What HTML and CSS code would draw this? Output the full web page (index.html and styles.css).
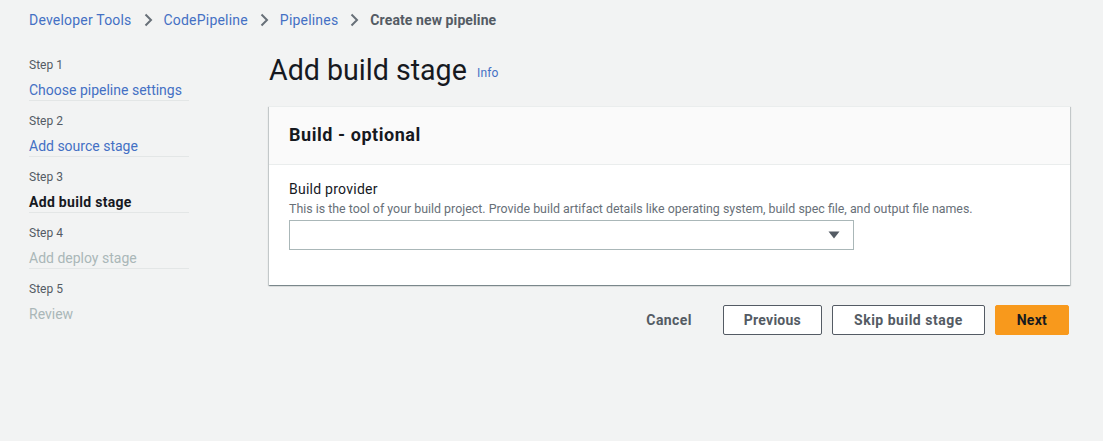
FILE: index.html
```html
<!DOCTYPE html>
<html>
<head>
<meta charset="utf-8">
<link rel="stylesheet" href="styles.css">
</head>
<body>
<nav class="crumbs">
  <a class="crumb-link">Developer Tools</a>
  <svg class="chev" width="16" height="16" viewBox="0 0 16 16"><path d="M5.5 2.5l5.5 5.5-5.5 5.5" fill="none" stroke="#687078" stroke-width="2"/></svg>
  <a class="crumb-link">CodePipeline</a>
  <svg class="chev" width="16" height="16" viewBox="0 0 16 16"><path d="M5.5 2.5l5.5 5.5-5.5 5.5" fill="none" stroke="#687078" stroke-width="2"/></svg>
  <a class="crumb-link">Pipelines</a>
  <svg class="chev" width="16" height="16" viewBox="0 0 16 16"><path d="M5.5 2.5l5.5 5.5-5.5 5.5" fill="none" stroke="#687078" stroke-width="2"/></svg>
  <span class="crumb-current">Create new pipeline</span>
</nav>
<div class="layout">
  <aside class="steps">
    <div class="step"><div class="step-num">Step 1</div><div class="step-title link">Choose pipeline settings</div></div>
    <div class="step"><div class="step-num">Step 2</div><div class="step-title link">Add source stage</div></div>
    <div class="step"><div class="step-num">Step 3</div><div class="step-title active">Add build stage</div></div>
    <div class="step"><div class="step-num">Step 4</div><div class="step-title disabled">Add deploy stage</div></div>
    <div class="step"><div class="step-num">Step 5</div><div class="step-title disabled nodiv">Review</div></div>
  </aside>
  <main class="main">
    <h1 class="title">Add build stage <a class="info">Info</a></h1>
    <section class="card">
      <div class="card-head">Build - optional</div>
      <div class="card-body">
        <div class="label">Build provider</div>
        <div class="desc">This is the tool of your build project. Provide build artifact details like operating system, build spec file, and output file names.</div>
        <div class="select">
          <svg width="12" height="8" viewBox="0 0 12 8"><path d="M0.5 0.5h11L6 7.5z" fill="#545b64"/></svg>
        </div>
      </div>
    </section>
    <div class="actions">
      <button class="btn btn-link">Cancel</button>
      <button class="btn btn-normal">Previous</button>
      <button class="btn btn-normal btn-skip">Skip build stage</button>
      <button class="btn btn-primary">Next</button>
    </div>
  </main>
</div>
</body>
</html>
```

FILE: styles.css
```css
* { box-sizing: border-box; }
body {
  margin: 0;
  background: #f2f3f3;
  font-family: Roboto, "Open Sans", "Liberation Sans", sans-serif;
  color: #16191f;
  font-size: 14px;
}
.crumbs {
  display: flex;
  align-items: center;
  padding: 11px 29px 0;
  height: 29px;
  line-height: 18px;
}
.crumb-link { color: #4470c4; font-size: 14px; letter-spacing: 0.2px; }
.chev { margin: 0 8px; }
.crumb-current { color: #545b64; font-weight: 700; font-size: 14px; letter-spacing: 0.1px; }

.layout { display: flex; }
.steps {
  width: 160px;
  margin-left: 29px;
  padding-top: 28px;
}
.step { margin-bottom: 12px; }
.step-num {
  font-size: 12px;
  line-height: 16px;
  color: #545b64;
  margin-bottom: 7px;
}
.step-title {
  font-size: 14px;
  line-height: 20px;
  border-bottom: 1px solid #e3e6e6;
}
.step-title.nodiv { border-bottom: none; }
.link { color: #4470c4; }
.active { font-weight: 700; color: #16191f; letter-spacing: 0.3px; }
.disabled { color: #aab7b8; }

.main {
  margin-left: 80px;
  width: 801px;
  padding-top: 23px;
}
.title {
  margin: 0 0 15px;
  font-size: 28.6px;
  line-height: 36px;
  font-weight: 400;
  color: #16191f;
}
.info {
  font-size: 12px;
  color: #4470c4;
  margin-left: 3px;
  vertical-align: 3px;
  letter-spacing: 0.2px;
}
.card {
  background: #fff;
  box-shadow: 0 1px 1px 0 rgba(0,28,36,.3), 1px 1px 1px 0 rgba(0,28,36,.15), -1px 1px 1px 0 rgba(0,28,36,.15);
  border-top: 1px solid #eaeded;
}
.card-head {
  background: #fafafa;
  padding: 18px 20px 19px;
  font-size: 18px;
  line-height: 20px;
  font-weight: 700;
  letter-spacing: 0.55px;
  border-bottom: 1px solid #eaeded;
}
.card-body { padding: 14px 20px 35px; }
.label { font-size: 14px; line-height: 20px; color: #16191f; letter-spacing: 0.25px; }
.desc { font-size: 12.4px; line-height: 16px; color: #687078; margin-top: 2px; }
.select {
  margin-top: 3px;
  width: 565px;
  height: 30px;
  border: 1px solid #aab7b8;
  background: #fff;
  display: flex;
  align-items: center;
  justify-content: flex-end;
  padding-right: 13px;
}
.actions {
  display: flex;
  justify-content: flex-end;
  gap: 10px;
  margin-top: 20px;
}
.btn {
  height: 30px;
  padding: 0 20px;
  font-family: inherit;
  font-size: 14px;
  font-weight: 700;
  letter-spacing: 0.25px;
  border-radius: 2px;
  border: 1px solid transparent;
  background: none;
  color: #545b64;
}
.btn-link { padding: 0 20px; letter-spacing: 0.4px; }
.btn-normal { background: #fff; border-color: #545b64; color: #545b64; }
.btn-skip { padding: 0 21px; letter-spacing: 0.5px; }
.btn-primary { background: #f8991c; border-color: #f8991c; color: #16191f; padding: 0 21px; margin-right: 1px; }
```
